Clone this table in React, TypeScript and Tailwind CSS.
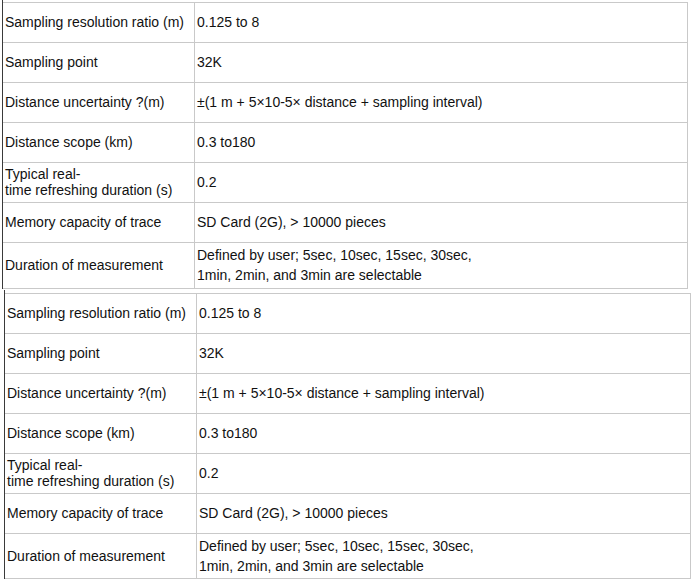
import React from 'react';

interface SpecRow {
  label: string[];
  value: string[];
  tall?: boolean;
}

const rows: SpecRow[] = [
  { label: ['Sampling resolution ratio (m)'], value: ['0.125 to 8'] },
  { label: ['Sampling point'], value: ['32K'] },
  { label: ['Distance uncertainty ?(m)'], value: ['±(1 m + 5×10-5× distance + sampling interval)'] },
  { label: ['Distance scope (km)'], value: ['0.3 to180'] },
  { label: ['Typical real-', 'time refreshing duration (s)'], value: ['0.2'] },
  { label: ['Memory capacity of trace'], value: ['SD Card (2G), > 10000 pieces'] },
  {
    label: ['Duration of measurement'],
    value: ['Defined by user; 5sec, 10sec, 15sec, 30sec,', '1min, 2min, and 3min are selectable'],
    tall: true,
  },
];

const Lines = ({ lines, leading }: { lines: string[]; leading: string }) => (
  <div className={leading}>
    {lines.map((l, i) => (
      <div key={i}>{l}</div>
    ))}
  </div>
);

// one spec table, the wrapper carries the dark left edge
const SpecTable = ({ wrapClass, lastHeight }: { wrapClass: string; lastHeight: string }) => (
  <div className={`border-l border-[#3a3a3a] ${wrapClass}`}>
    <div className="border-t border-r border-[#c9c9c9]">
      {rows.map((r, i) => (
        <div
          key={i}
          className={`flex border-b border-[#c9c9c9] ${r.tall ? lastHeight : 'h-[40px]'}`}
        >
          <div className="w-[192px] shrink-0 border-r border-[#c9c9c9] pl-[2px] pb-[1px] flex items-center">
            <Lines lines={r.label} leading="leading-[16px]" />
          </div>
          <div className="flex-1 pl-[2px] pb-[1px] flex items-center">
            <Lines lines={r.value} leading="leading-[20px]" />
          </div>
        </div>
      ))}
    </div>
  </div>
);

export default function App() {
  return (
    <div
      className="w-[692px] h-[581px] bg-white text-[14px] text-[#111]"
      style={{ fontFamily: '"Liberation Sans", Arial, sans-serif' }}
    >
      <SpecTable wrapClass="ml-[2px] w-[686px] pt-[2px]" lastHeight="h-[46px]" />
      <SpecTable wrapClass="ml-[4px] w-[687px] mt-[1px] pt-[3px]" lastHeight="h-[45px]" />
    </div>
  );
}
